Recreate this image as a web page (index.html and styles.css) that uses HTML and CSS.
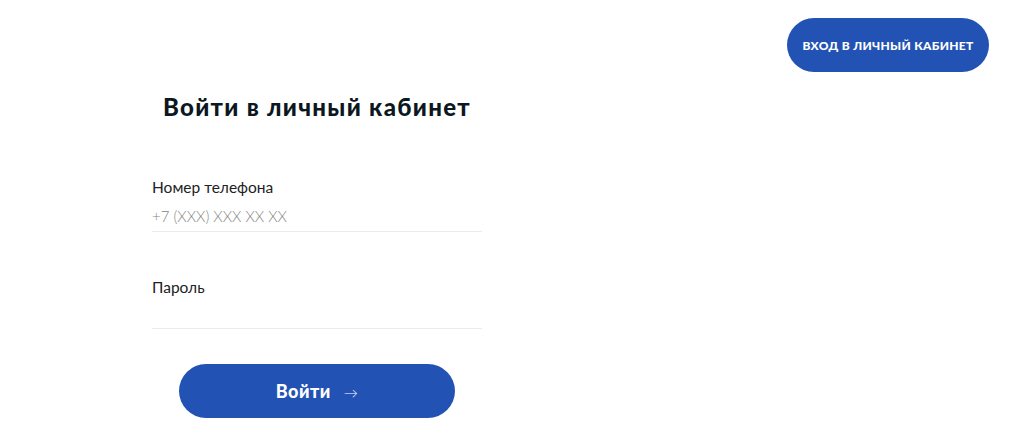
FILE: index.html
```html
<!DOCTYPE html>
<html lang="ru">
<head>
<meta charset="utf-8">
<link rel="stylesheet" href="styles.css">
</head>
<body>
<header class="topbar">
  <a class="cabinet-btn" href="#">ВХОД В ЛИЧНЫЙ КАБИНЕТ</a>
</header>
<main class="login">
  <h1 class="title">Войти в личный кабинет</h1>
  <form class="form">
    <label class="field">
      <span class="label">Номер телефона</span>
      <input class="input input-phone" type="tel" placeholder="+7 (XXX) XXX XX XX">
    </label>
    <label class="field field-pass">
      <span class="label">Пароль</span>
      <input class="input input-pass" type="password">
    </label>
    <button class="submit" type="button">Войти <span class="arrow">→</span></button>
  </form>
</main>
</body>
</html>
```
FILE: styles.css
```css
* { box-sizing: border-box; }
body {
  margin: 0;
  background: #fff;
  font-family: "Lato", "Noto Sans", sans-serif;
  color: #111;
}
.topbar {
  display: flex;
  justify-content: flex-end;
  padding: 18px 35px 0 0;
}
.cabinet-btn {
  display: flex;
  align-items: center;
  justify-content: center;
  width: 202px;
  height: 54px;
  border-radius: 27px;
  background: #2152b4;
  color: #fff;
  text-decoration: none;
  font-size: 12px;
  font-weight: 900;
  letter-spacing: 0.3px;
}
.login {
  width: 330px;
  margin-left: 152px;
}
.title {
  margin: 20px -10px 0;
  text-align: center;
  font-size: 24px;
  line-height: 30px;
  font-weight: 900;
  letter-spacing: 1.3px;
  color: #0c1722;
}
.form {
  display: flex;
  flex-direction: column;
  margin-top: 55px;
}
.field {
  display: flex;
  flex-direction: column;
}
.field-pass { margin-top: 45px; }
.label {
  font-size: 15.5px;
  line-height: 20px;
  color: #222;
}
.input {
  border: 0;
  border-bottom: 1px solid #ececec;
  padding: 0;
  font-family: inherit;
  font-size: 15px;
  font-weight: 300;
  color: #222;
  outline: none;
  background: transparent;
}
.input-phone { height: 35px; padding-top: 4px; }
.input-pass { height: 32px; }
.input::placeholder { color: #858585; }
.submit {
  align-self: center;
  width: 276px;
  height: 54px;
  margin-top: 35px;
  border: 0;
  border-radius: 27px;
  background: #2152b4;
  color: #fff;
  font-family: inherit;
  font-size: 18px;
  font-weight: 900;
  letter-spacing: 0.5px;
  cursor: pointer;
}
.arrow {
  font-weight: 300;
  font-size: 14px;
  margin-left: 8px;
}
```
